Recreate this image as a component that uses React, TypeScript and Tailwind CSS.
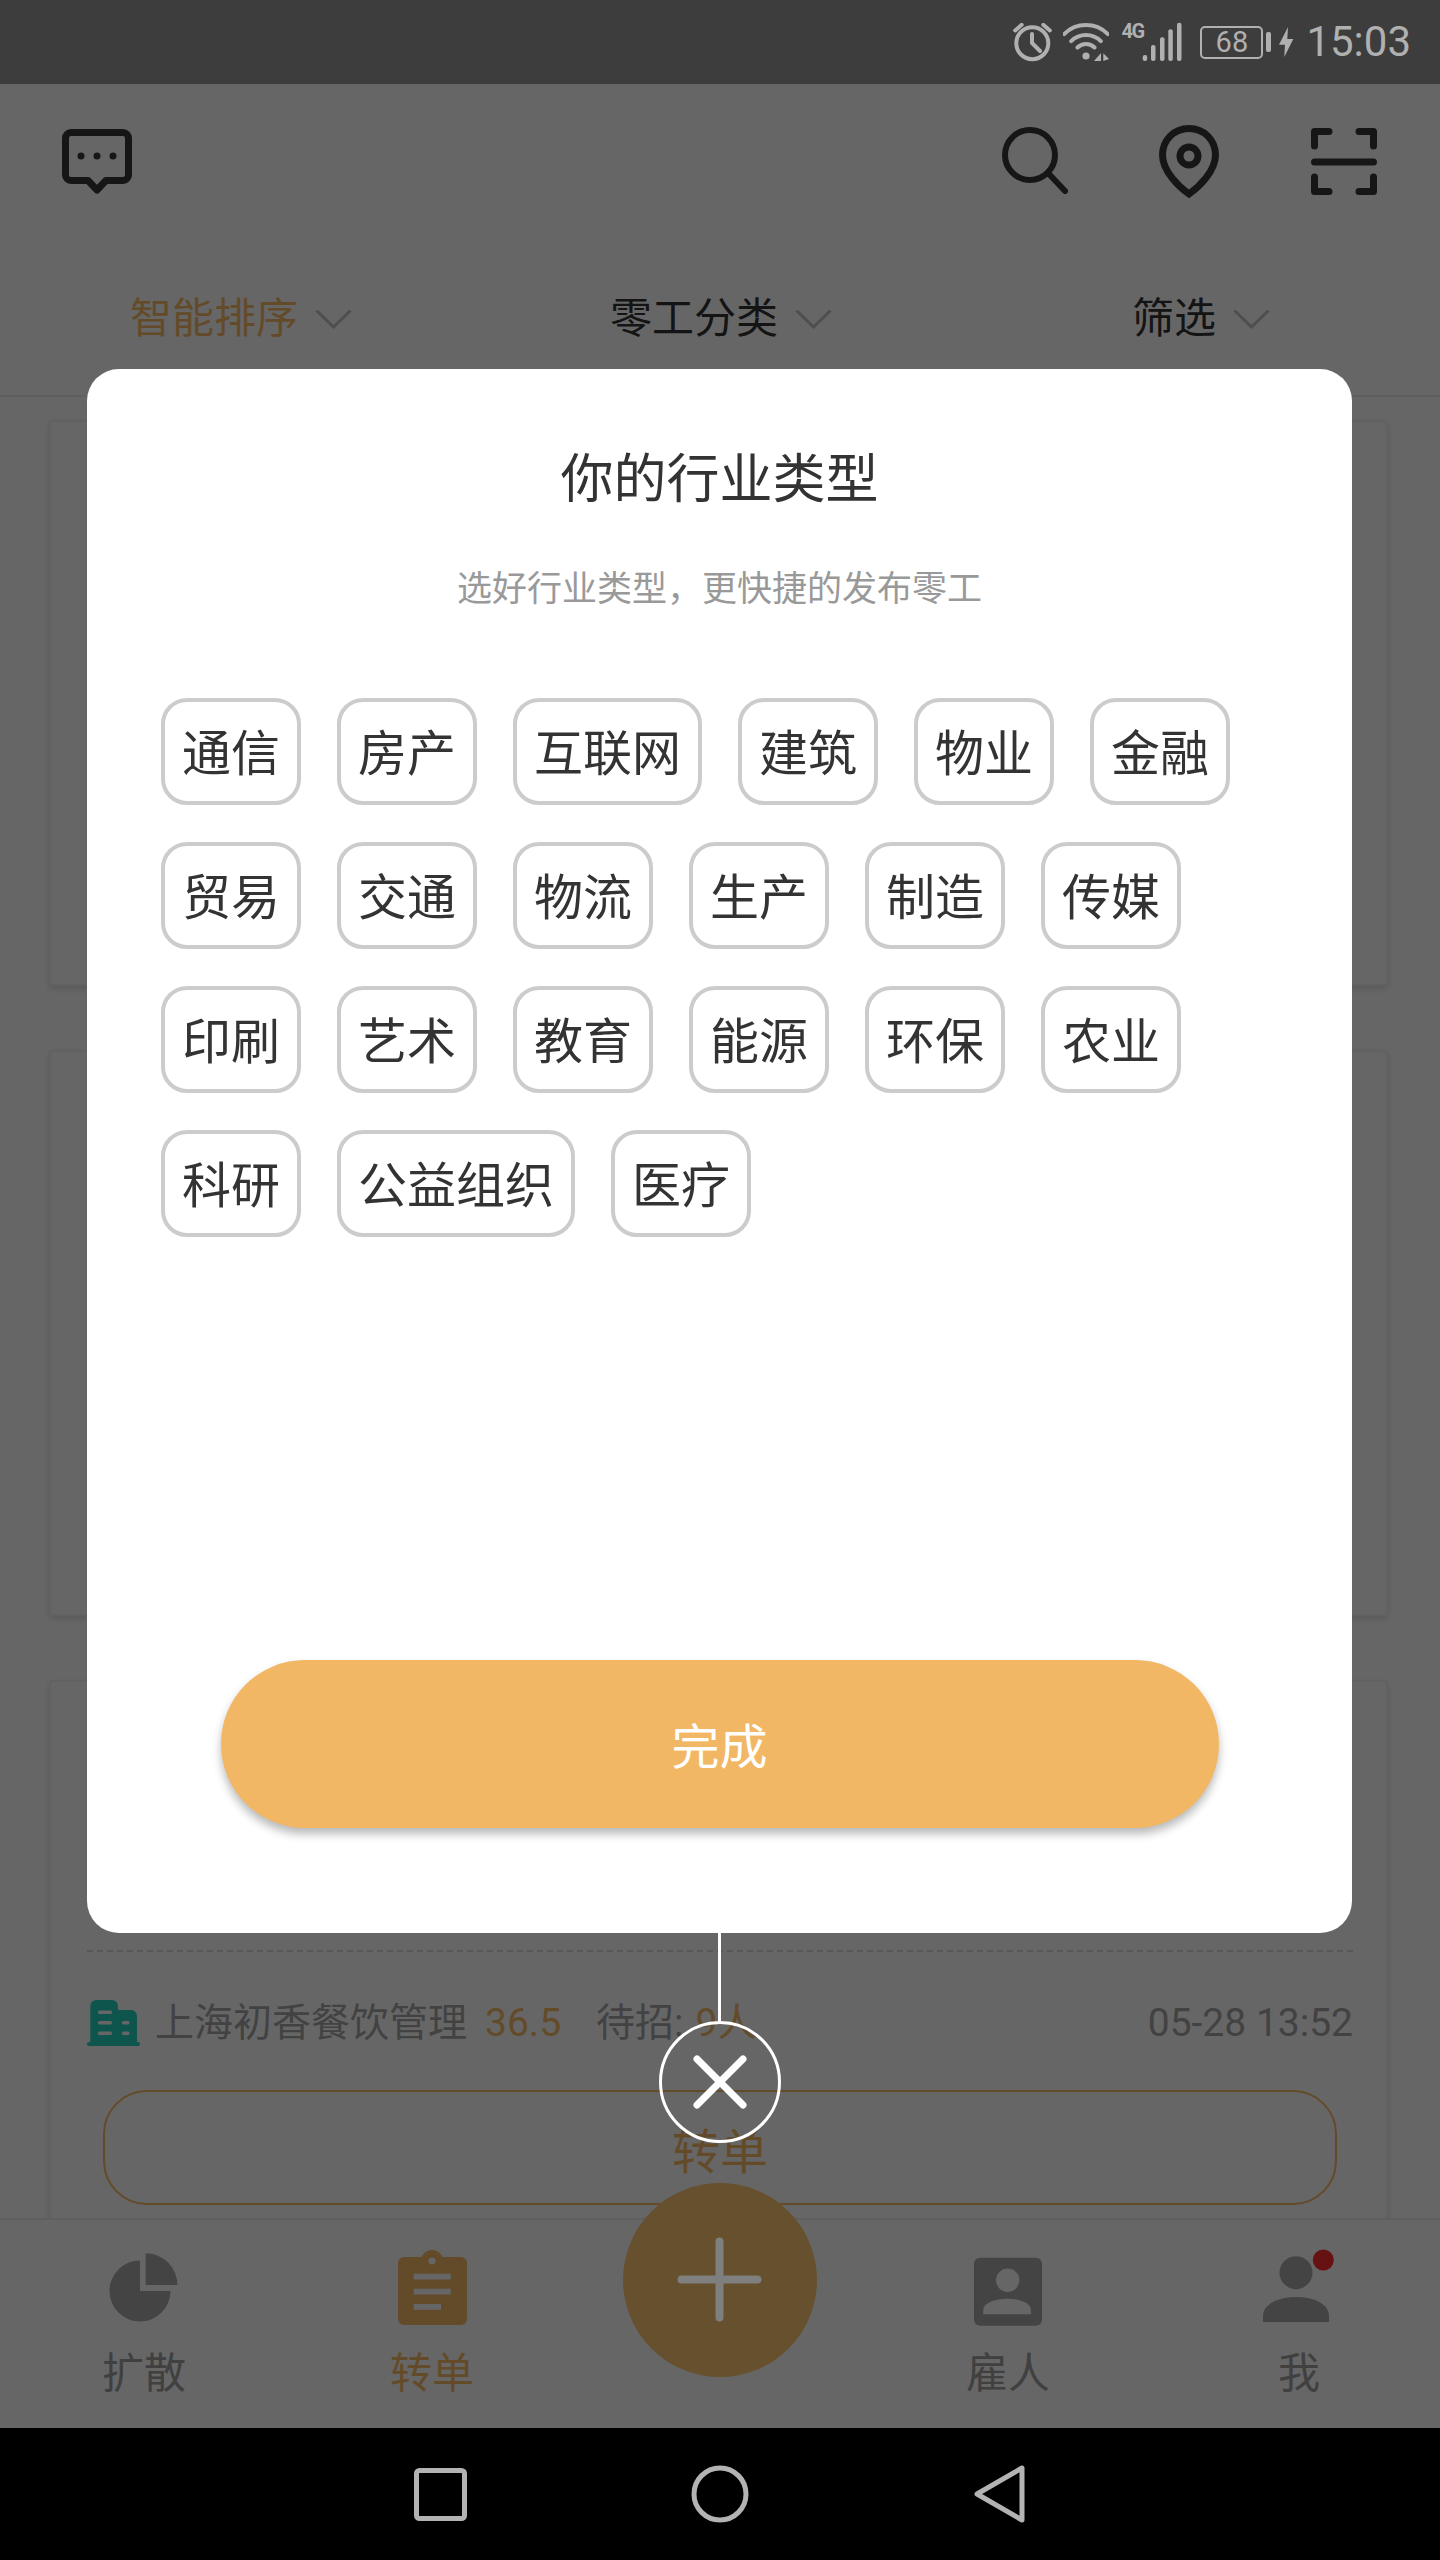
import React from 'react';

const industries = [
  '通信', '房产', '互联网', '建筑', '物业', '金融',
  '贸易', '交通', '物流', '生产', '制造', '传媒',
  '印刷', '艺术', '教育', '能源', '环保', '农业',
  '科研', '公益组织', '医疗',
];

const cjk = "font-['Roboto','Noto_Sans_CJK_SC',sans-serif]";

const StatusBar = () => (
  <div className="flex h-[84px] items-center justify-end bg-[#3d3d3d] pr-[29px] text-[#b0b0b0]">
    {/* alarm */}
    <svg width="39" height="39" viewBox="0 0 39 39" fill="none" stroke="#b0b0b0" strokeWidth="4" strokeLinecap="round" strokeLinejoin="round">
      <circle cx="19.3" cy="20.2" r="16" />
      <path d="M19 11v9l8 8M2.2 7.5 8.7 1.8M30.3 1.8l6.5 5.7" />
    </svg>
    {/* wifi */}
    <svg className="ml-[11px]" width="46" height="38" viewBox="0 0 46 38" fill="none" stroke="#b0b0b0" strokeWidth="4" strokeLinecap="round">
      <path d="M1.1 11.1A31 31 0 0 1 44.9 11.1M8.2 18.2A21 21 0 0 1 37.8 18.2M14.5 24.5A12 12 0 0 1 31.500 24.500" />
      <circle cx="23" cy="33" r="3.600" fill="#b0b0b0" stroke="none" />
      <path d="M38 30v8h-7zM40.300 30.300l5.700 5.700-5.700 2z" fill="#b0b0b0" stroke="none" />
    </svg>
    {/* 4G + signal */}
    <div className="ml-[12px] flex h-[40px] w-[61px] items-start">
      <span className="w-[21px] font-['Roboto',sans-serif] text-[20px] leading-[18px] font-bold tracking-[-1.5px]">4G</span>
      <svg width="40" height="40" viewBox="0 0 40 40" fill="#b0b0b0">
        <rect x="0.700" y="33" width="4.500" height="6" rx="2" />
        <rect x="9" y="23" width="4.500" height="16" rx="2" />
        <rect x="18" y="15.300" width="4.500" height="23.700" rx="2" />
        <rect x="26.300" y="7.300" width="4.500" height="31.700" rx="2" />
        <rect x="35" y="0.700" width="4.500" height="38.300" rx="2" />
      </svg>
    </div>
    {/* battery */}
    <div className="ml-[18px] flex h-[33px] w-[63px] items-center justify-center rounded-[5px] border-2 border-[#b0b0b0] font-['Roboto',sans-serif] text-[29px] leading-none">
      68
    </div>
    <div className="ml-[3px] h-[20px] w-[5px] rounded-[2px] bg-[#b0b0b0]" />
    <svg className="ml-[8px]" width="15" height="30" viewBox="0 0 15 30" fill="#b0b0b0">
      <path d="M9 0 0 17.700h6L5.300 30l9-18h-6z" />
    </svg>
    <span className="ml-[12px] font-['Roboto',sans-serif] text-[42px] leading-none">15:03</span>
  </div>
);

const Chevron = () => (
  <svg width="37" height="20" viewBox="0 0 37 20" fill="none" stroke="#c4c4c4" strokeWidth="3">
    <path d="M1.500 1.500 18.500 18l17-16.500" />
  </svg>
);

const Header = () => (
  <div className="h-[313px] border-b-2 border-[#eeeeee] bg-white">
    <div className="flex items-start justify-between pt-[37px] pr-[56px] pl-[57px]">
      <svg width="80" height="80" viewBox="0 0 80 80" fill="none" stroke="#383838" strokeWidth="7" strokeLinejoin="round">
        <path d="M14 11.500h52a5.500 5.500 0 0 1 5.500 5.500v37a5.500 5.500 0 0 1-5.500 5.500H49L40 69l-9-9.500H14A5.500 5.500 0 0 1 8.500 54V17A5.500 5.500 0 0 1 14 11.500z" />
        <g fill="#383838" stroke="none">
          <circle cx="24" cy="35" r="3.500" />
          <circle cx="40" cy="35" r="3.500" />
          <circle cx="56" cy="35" r="3.500" />
        </g>
      </svg>
      <div className="flex gap-[75px]">
        <svg width="80" height="80" viewBox="0 0 80 80" fill="none" stroke="#383838" strokeWidth="6" strokeLinecap="round">
          <circle cx="36" cy="34" r="25" />
          <path d="M55 53l16 17" />
        </svg>
        <svg width="80" height="80" viewBox="0 0 80 80" fill="none" stroke="#383838" strokeWidth="7">
          <path d="M40 7.500c15 0 26.500 11.500 26.500 26.500C66.500 50 50 66 40 73 30 66 13.500 50 13.500 34 13.500 19 25 7.500 40 7.500z" />
          <circle cx="40" cy="35" r="9" />
        </svg>
        <svg width="80" height="80" viewBox="0 0 80 80" fill="none" stroke="#383838" strokeWidth="7" strokeLinecap="round" strokeLinejoin="round">
          <path d="M10.500 25V10.500H25M55 10.500h14.500V25M10.500 56v14.500H25M69.500 56v14.500H55M10.500 41h59" />
        </svg>
      </div>
    </div>
    <div className={`mt-[90px] grid grid-cols-3 text-[42px] leading-[56px] text-[#333333] ${cjk}`}>
      <div className="flex items-center justify-center gap-[17px] pl-[2px] text-[#f8bb69]">
        智能排序
        <Chevron />
      </div>
      <div className="flex items-center justify-center gap-[17px] pl-[2px]">
        零工分类
        <Chevron />
      </div>
      <div className="flex items-center justify-center gap-[17px] pl-[2px]">
        筛选
        <Chevron />
      </div>
    </div>
  </div>
);

// the first two cards sit behind the dialog, only their edges and dividers show
const HiddenCard = () => (
  <div className="h-[566px] shrink-0 rounded-[4px] border-2 border-[#f3f3f3] bg-white pr-[34px] pl-[36px] shadow-[0_3px_6px_rgba(0,0,0,0.12)]">
    <div className="h-[358px] border-b-2 border-dashed border-[#dddddd]" />
  </div>
);

const JobCard = () => (
  <div className="shrink-0 rounded-[4px] border-2 border-[#f3f3f3] bg-white pr-[33px] pb-[40px] pl-[36px] shadow-[0_3px_6px_rgba(0,0,0,0.12)]">
    <div className="h-[270px] border-b-2 border-dashed border-[#dddddd]" />
    <div className={`flex h-[138px] items-center pt-[4px] text-[39px] text-[#a6a6a6] ${cjk}`}>
      <svg width="53" height="46" viewBox="0 0 53 46" className="shrink-0">
        <path d="M3.300 42V6a6 6 0 0 1 6-6H25a6 6 0 0 1 6 6v4h13a6 6 0 0 1 6 6v26z" fill="#24d4c4" />
        <rect y="42" width="53" height="4" rx="2" fill="#24d4c4" />
        <g fill="white">
          <rect x="11" y="10.500" width="14" height="3.500" rx="1.500" />
          <rect x="11" y="21" width="14" height="3.500" rx="1.500" />
          <rect x="11" y="31.500" width="14" height="3.500" rx="1.500" />
          <rect x="35" y="21" width="7.500" height="3.500" rx="1.500" />
          <rect x="35" y="31.500" width="7.500" height="3.500" rx="1.500" />
        </g>
      </svg>
      <span className="ml-[15px]">上海初香餐饮管理</span>
      <span className="ml-[18px] text-[#f8bb69]">36.5</span>
      <span className="ml-[35px]">待招:</span>
      <span className="ml-[12px] text-[#f8bb69]">9人</span>
      <span className="ml-auto">05-28 13:52</span>
    </div>
    <div className={`mr-[16px] ml-[16px] flex h-[115px] items-center justify-center rounded-[44px] border-[2.500px] border-[#f8bb69] pt-[10px] text-[48px] leading-none text-[#f8bb69] ${cjk}`}>
      转单
    </div>
  </div>
);

const TabItem = ({ label, active, children, labelClass }: { label: string; active?: boolean; children: React.ReactNode; labelClass?: string }) => (
  <div className="flex flex-col items-center pt-[26px]">
    {children}
    <span className={`mt-[20px] text-[42px] leading-[56px] ${active ? 'text-[#f8bb69]' : 'text-[#a0a0a0]'} ${labelClass ?? ''} ${cjk}`}>{label}</span>
  </div>
);

const TabBar = () => (
  <div className="relative grid h-[210px] shrink-0 grid-cols-5 border-t-2 border-[#eeeeee] bg-white">
    <TabItem label="扩散">
      <svg width="80" height="80" viewBox="0 0 80 80" fill="#aaaaaa">
        <path d="M36 14.500A30.500 30.500 0 1 0 66.500 45H36z" />
        <path d="M41.700 7.300A31.700 31.700 0 0 1 73.400 39H41.700z" />
      </svg>
    </TabItem>
    <TabItem label="转单" active>
      <svg width="80" height="80" viewBox="0 0 80 80">
        <circle cx="40" cy="15" r="11" fill="#f8bb69" />
        <rect x="6" y="11" width="69" height="68" rx="6" fill="#f8bb69" />
        <circle cx="40" cy="15" r="3.500" fill="white" />
        <rect x="21.700" y="27.700" width="37" height="5.800" fill="white" />
        <rect x="21.700" y="42.700" width="37" height="5.800" fill="white" />
        <rect x="21.700" y="58" width="27.300" height="5.800" fill="white" />
      </svg>
    </TabItem>
    <div className="flex justify-center">
      <div className="-mt-[37px] h-[194px] w-[194px] rounded-full bg-[#ffc870]" />
    </div>
    <TabItem label="雇人">
      <svg width="80" height="80" viewBox="0 0 80 80">
        <rect x="6" y="11.700" width="68" height="68" rx="6" fill="#aaaaaa" />
        <circle cx="39.700" cy="34.300" r="11.700" fill="white" />
        <path d="M15.300 68.300V64c0-7 11.700-11.300 24.200-11.300S63 57 63 64v4.300z" fill="white" />
      </svg>
    </TabItem>
    <TabItem label="我" labelClass="ml-[6px]">
      <svg width="80" height="80" viewBox="0 0 80 80" fill="#aaaaaa">
        <circle cx="40" cy="26.700" r="16.500" />
        <path d="M7 76v-6c0-12 15-19 33-19s33 7 33 19v6z" />
        <circle cx="67.300" cy="14" r="10.500" fill="#ff2f2f" />
      </svg>
    </TabItem>
  </div>
);

const Modal = () => (
  <div className="absolute top-[285px] left-[87px] flex h-[1564px] w-[1265px] flex-col rounded-[32px] bg-white pt-[75px] pb-[105px]">
    <div className={`text-center text-[53px] leading-[72px] text-[#333333] ${cjk}`}>你的行业类型</div>
    <div className={`mt-[50px] text-center text-[35px] leading-[48px] text-[#999999] ${cjk}`}>选好行业类型，更快捷的发布零工</div>
    <div className="mt-[84px] flex flex-wrap gap-x-[36px] gap-y-[37px] px-[74px]">
      {industries.map((name) => (
        <div
          key={name}
          className={`flex h-[107px] items-center rounded-[26px] border-[4px] border-[#cccccc] px-[17px] pt-[6px] text-[49px] text-[#333333] ${cjk}`}
        >
          {name}
        </div>
      ))}
    </div>
    <button
      className={`mx-auto mt-auto flex h-[168px] w-[998px] items-center justify-center rounded-full bg-[#f2b765] pt-[7px] text-[48px] text-white shadow-[0_6px_10px_rgba(0,0,0,0.28)] ${cjk}`}
    >
      完成
    </button>
    {/* close button hanging below the dialog */}
    <div className="absolute top-full left-1/2 flex -translate-x-1/2 flex-col items-center">
      <div className="h-[88px] w-[3.500px] bg-white" />
      <div className="flex h-[122px] w-[122px] items-center justify-center rounded-full border-[3.500px] border-white">
        <svg width="56" height="56" viewBox="0 0 56 56" fill="none" stroke="white" strokeWidth="7" strokeLinecap="round">
          <path d="M5 5l46 46M51 5 5 51" />
        </svg>
      </div>
    </div>
  </div>
);

const NavBar = () => (
  <div className="flex h-[132px] items-center justify-center bg-black">
    <div className="flex w-[280px] justify-center">
      <svg width="60" height="62" viewBox="0 0 60 62" fill="none" stroke="#b3b3b3" strokeWidth="5">
        <rect x="6.500" y="7.500" width="48" height="48" rx="3" />
      </svg>
    </div>
    <div className="flex w-[280px] justify-center">
      <svg width="62" height="62" viewBox="0 0 62 62" fill="none" stroke="#b3b3b3" strokeWidth="5">
        <circle cx="31" cy="31" r="26" />
      </svg>
    </div>
    <div className="flex w-[280px] justify-center">
      <svg width="56" height="62" viewBox="0 0 56 62" fill="none" stroke="#b3b3b3" strokeWidth="5" strokeLinejoin="round">
        <path d="M50 5v52L5 31z" />
      </svg>
    </div>
  </div>
);

const App = () => {
  return (
    <div className="flex h-[2560px] w-[1440px] flex-col overflow-hidden bg-black">
      <StatusBar />
      <div className="relative flex h-[2344px] flex-col bg-white">
        <Header />
        <div className="flex min-h-0 flex-1 flex-col gap-[64px] overflow-hidden pt-[23px] pr-[52px] pl-[49px]">
          <HiddenCard />
          <HiddenCard />
          <JobCard />
        </div>
        <TabBar />
        <div className="absolute inset-0 bg-black/60" />
        <svg className="absolute top-[2153px] left-[677px]" width="85" height="85" viewBox="0 0 85 85" fill="none" stroke="#7f7f7f" strokeWidth="8" strokeLinecap="round">
          <path d="M42.500 4.500v76M4.500 42.500h76" />
        </svg>
        <Modal />
      </div>
      <NavBar />
    </div>
  );
};

export default App;
